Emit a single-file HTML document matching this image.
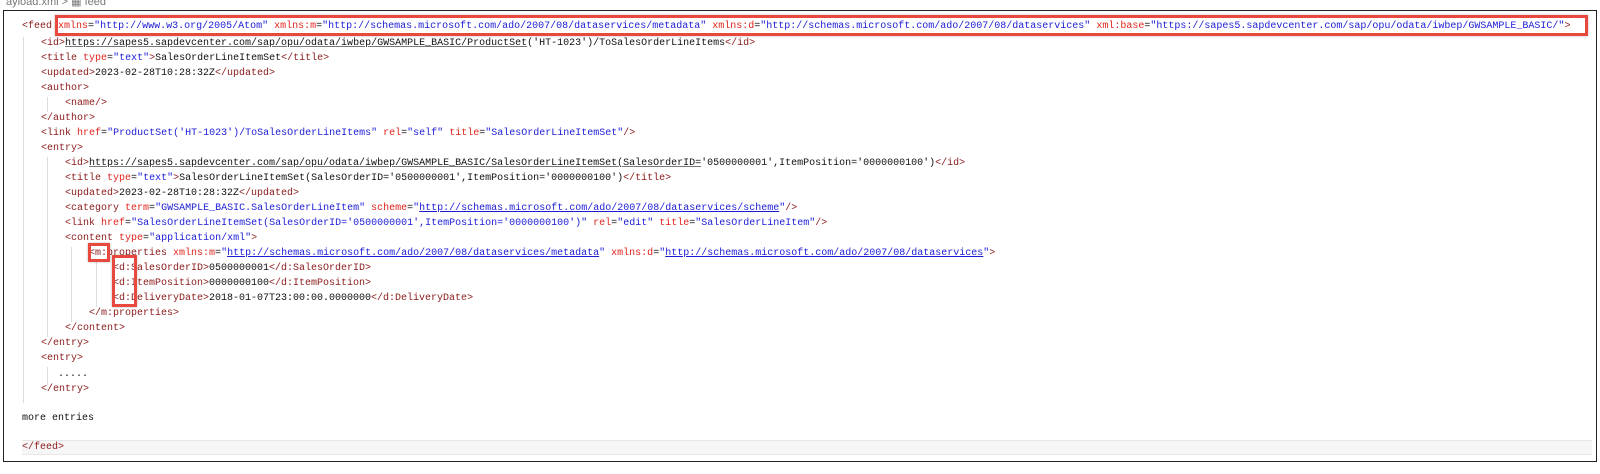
<!DOCTYPE html>
<html><head><meta charset="utf-8"><style>
body{margin:0;width:1600px;height:474px;background:#fff;position:relative;overflow:hidden;font-family:"Liberation Mono",monospace;font-size:10px;}
.frame{position:absolute;left:3px;top:10px;width:1594px;height:452px;border:1.5px solid #222;box-sizing:border-box;}
.crumb{position:absolute;left:6px;top:-5px;font-family:"Liberation Sans",sans-serif;font-size:11px;color:#777;}
.l{position:absolute;white-space:pre;line-height:15px;color:#111;}
.t{color:#8b1a1a}.a{color:#e0241c}.v{color:#1c1cd6}
.u{text-decoration:underline;text-decoration-color:#777}
.vu{color:#1c1cd6;text-decoration:underline}
.g{position:absolute;width:1px;background:#ddd}
.box{position:absolute;border:3px solid #e8483e;box-sizing:border-box;box-shadow:0 0 2px rgba(0,0,0,.3)}
.hl{position:absolute;left:22px;top:440px;width:1570px;height:15px;background:#f6f6f6;border-top:1px solid #e6e6e6;border-bottom:1px solid #e6e6e6;box-sizing:border-box}
</style></head><body>
<div class="crumb">ayload.xml &gt; ▦ feed</div>
<div class="frame"></div>
<div class="hl"></div>
<div class="g" style="left:23px;top:37px;height:366px"></div>
<div class="g" style="left:47px;top:97px;height:15px"></div>
<div class="g" style="left:47px;top:157px;height:180px"></div>
<div class="g" style="left:71px;top:247px;height:75px"></div>
<div class="g" style="left:96px;top:262px;height:45px"></div>
<div class="g" style="left:47px;top:367px;height:18px"></div>

<div class="l" style="left:22px;top:19px"><span class="t">&lt;feed</span> <span class="a">xmlns</span>=<span class="v">"http://www.w3.org/2005/Atom"</span> <span class="a">xmlns:m</span>=<span class="v">"http://schemas.microsoft.com/ado/2007/08/dataservices/metadata"</span> <span class="a">xmlns:d</span>=<span class="v">"http://schemas.microsoft.com/ado/2007/08/dataservices"</span> <span class="a">xml:base</span>=<span class="v">"https://sapes5.sapdevcenter.com/sap/opu/odata/iwbep/GWSAMPLE_BASIC/"</span><span class="t">&gt;</span></div>
<div class="l" style="left:41px;top:36px"><span class="t">&lt;id&gt;</span><span class="u">https://sapes5.sapdevcenter.com/sap/opu/odata/iwbep/GWSAMPLE_BASIC/ProductSet</span>('HT-1023')/ToSalesOrderLineItems<span class="t">&lt;/id&gt;</span></div>
<div class="l" style="left:41px;top:51px"><span class="t">&lt;title</span> <span class="a">type</span>=<span class="v">"text"</span><span class="t">&gt;</span>SalesOrderLineItemSet<span class="t">&lt;/title&gt;</span></div>
<div class="l" style="left:41px;top:66px"><span class="t">&lt;updated&gt;</span>2023-02-28T10:28:32Z<span class="t">&lt;/updated&gt;</span></div>
<div class="l" style="left:41px;top:81px"><span class="t">&lt;author&gt;</span></div>
<div class="l" style="left:65px;top:96px"><span class="t">&lt;name/&gt;</span></div>
<div class="l" style="left:41px;top:111px"><span class="t">&lt;/author&gt;</span></div>
<div class="l" style="left:41px;top:126px"><span class="t">&lt;link</span> <span class="a">href</span>=<span class="v">"ProductSet('HT-1023')/ToSalesOrderLineItems"</span> <span class="a">rel</span>=<span class="v">"self"</span> <span class="a">title</span>=<span class="v">"SalesOrderLineItemSet"</span><span class="t">/&gt;</span></div>
<div class="l" style="left:41px;top:141px"><span class="t">&lt;entry&gt;</span></div>
<div class="l" style="left:65px;top:156px"><span class="t">&lt;id&gt;</span><span class="u">https://sapes5.sapdevcenter.com/sap/opu/odata/iwbep/GWSAMPLE_BASIC/SalesOrderLineItemSet(SalesOrderID=</span>'0500000001',ItemPosition='0000000100')<span class="t">&lt;/id&gt;</span></div>
<div class="l" style="left:65px;top:171px"><span class="t">&lt;title</span> <span class="a">type</span>=<span class="v">"text"</span><span class="t">&gt;</span>SalesOrderLineItemSet(SalesOrderID='0500000001',ItemPosition='0000000100')<span class="t">&lt;/title&gt;</span></div>
<div class="l" style="left:65px;top:186px"><span class="t">&lt;updated&gt;</span>2023-02-28T10:28:32Z<span class="t">&lt;/updated&gt;</span></div>
<div class="l" style="left:65px;top:201px"><span class="t">&lt;category</span> <span class="a">term</span>=<span class="v">"GWSAMPLE_BASIC.SalesOrderLineItem"</span> <span class="a">scheme</span>=<span class="v">"</span><span class="vu">http://schemas.microsoft.com/ado/2007/08/dataservices/scheme</span><span class="v">"</span><span class="t">/&gt;</span></div>
<div class="l" style="left:65px;top:216px"><span class="t">&lt;link</span> <span class="a">href</span>=<span class="v">"SalesOrderLineItemSet(SalesOrderID='0500000001',ItemPosition='0000000100')"</span> <span class="a">rel</span>=<span class="v">"edit"</span> <span class="a">title</span>=<span class="v">"SalesOrderLineItem"</span><span class="t">/&gt;</span></div>
<div class="l" style="left:65px;top:231px"><span class="t">&lt;content</span> <span class="a">type</span>=<span class="v">"application/xml"</span><span class="t">&gt;</span></div>
<div class="l" style="left:89px;top:246px"><span class="t">&lt;m:properties</span> <span class="a">xmlns:m</span>=<span class="v">"</span><span class="vu">http://schemas.microsoft.com/ado/2007/08/dataservices/metadata</span><span class="v">"</span> <span class="a">xmlns:d</span>=<span class="v">"</span><span class="vu">http://schemas.microsoft.com/ado/2007/08/dataservices</span><span class="v">"</span><span class="t">&gt;</span></div>
<div class="l" style="left:113px;top:261px"><span class="t">&lt;d:SalesOrderID&gt;</span>0500000001<span class="t">&lt;/d:SalesOrderID&gt;</span></div>
<div class="l" style="left:113px;top:276px"><span class="t">&lt;d:ItemPosition&gt;</span>0000000100<span class="t">&lt;/d:ItemPosition&gt;</span></div>
<div class="l" style="left:113px;top:291px"><span class="t">&lt;d:DeliveryDate&gt;</span>2018-01-07T23:00:00.0000000<span class="t">&lt;/d:DeliveryDate&gt;</span></div>
<div class="l" style="left:89px;top:306px"><span class="t">&lt;/m:properties&gt;</span></div>
<div class="l" style="left:65px;top:321px"><span class="t">&lt;/content&gt;</span></div>
<div class="l" style="left:41px;top:336px"><span class="t">&lt;/entry&gt;</span></div>
<div class="l" style="left:41px;top:351px"><span class="t">&lt;entry&gt;</span></div>
<div class="l" style="left:58px;top:367px">.....</div>
<div class="l" style="left:41px;top:382px"><span class="t">&lt;/entry&gt;</span></div>
<div class="l" style="left:22px;top:411px">more entries</div>
<div class="l" style="left:22px;top:440px"><span class="t">&lt;/feed&gt;</span></div>

<div class="box" style="left:55px;top:15px;width:1533px;height:21px"></div>
<div class="box" style="left:88px;top:243px;width:22px;height:19px"></div>
<div class="box" style="left:112px;top:255px;width:25px;height:52px"></div>
</body></html>
